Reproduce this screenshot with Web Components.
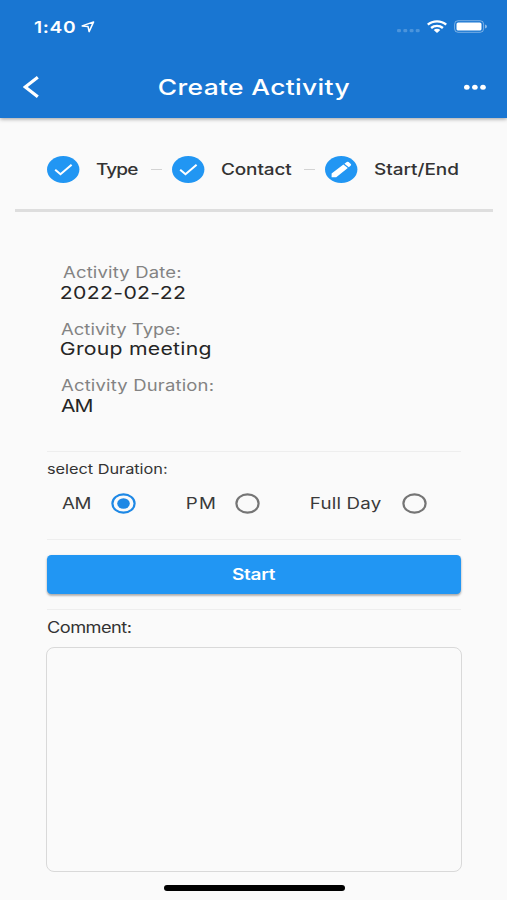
<!DOCTYPE html>
<html lang="en">
<head>
<meta charset="utf-8">
<title>Create Activity</title>
<style>
html, body { margin: 0; height: 100%; background: #fafafa; }
body { font-family: Inter, "Liberation Sans", sans-serif; overflow: hidden; }
</style>
</head>
<body>
<activity-app></activity-app>
<script>
const define = (name, html, setup) => customElements.define(name, class extends HTMLElement {
  constructor() {
    super();
    this.attachShadow({ mode: "open" }).innerHTML = html;
  }
  connectedCallback() { if (setup) setup(this, this.shadowRoot); }
});

/* Wide text: glyphs are widened by a fixed ratio and tracked to fill the given width. */
const STRETCH = 1.2;
const pen = document.createElement("canvas").getContext("2d");
define("wide-text", `
<style>
:host { display: block; flex: none; height: 20px; line-height: 20px; white-space: nowrap; }
span { display: inline-block; transform-origin: 0 50%; }
</style><span></span>`, (el, root) => {
  const text = el.getAttribute("text"), w = +el.getAttribute("w");
  const size = +el.getAttribute("size"), weight = el.getAttribute("weight") || 400;
  pen.font = `${weight} ${size}px Inter, "Liberation Sans", sans-serif`;
  const m = pen.measureText(text);
  const ink = m.actualBoundingBoxLeft + m.actualBoundingBoxRight;
  const gap = (w / STRETCH - ink) / (text.length - 1);
  const span = root.querySelector("span");
  span.textContent = text;
  span.style.cssText = `font-size:${size}px;font-weight:${weight};letter-spacing:${gap}px;transform:translateX(${m.actualBoundingBoxLeft * STRETCH}px) scaleX(${STRETCH})`;
  el.style.width = w + "px";
});

define("status-bar", `
<style>
:host { display: flex; height: 53px; align-items: center; padding: 0 20px 0 34px; box-sizing: border-box; }
svg { display: block; flex: none; }
.loc { margin-left: 6px; }
.dots { margin-left: auto; }
.wifi { margin-left: 7px; }
.bat { margin-left: 7px; }
</style>
<wide-text text="1:40" w="41" size="16" weight="600"></wide-text>
<svg class="loc" width="14" height="12" viewBox="0 0 14 12"><path d="M1.2 4.9 12.6 .9 8.1 10.6 7 5.4Z" fill="none" stroke="#fff" stroke-width="1.5" stroke-linejoin="round"/></svg>
<svg class="dots" width="23" height="12" viewBox="0 0 23 12"><g fill="#fff" fill-opacity=".22"><rect y="8" width="4" height="3.2" rx="1.3"/><rect x="6.3" y="8" width="4" height="3.2" rx="1.3"/><rect x="12.6" y="8" width="4" height="3.2" rx="1.3"/><rect x="18.7" y="8" width="4" height="3.2" rx="1.3"/></g></svg>
<svg class="wifi" width="20" height="13" viewBox="0 0 20 13"><g fill="none" stroke="#fff" stroke-width="2.4"><path d="M.8 4.7C5.8 .3 14.2 .3 19.2 4.7"/><path d="M4.1 8C7.4 5.1 12.6 5.1 15.9 8"/></g><path d="M6.7 10C8.6 8.4 11.4 8.4 13.3 10L10 12.9Z" fill="#fff"/></svg>
<svg class="bat" width="33" height="13" viewBox="0 0 33 13"><rect x=".6" y=".7" width="29" height="11.6" rx="3.5" fill="none" stroke="#fff" stroke-opacity=".42"/><rect x="2.5" y="2.4" width="25" height="8.2" rx="1.7" fill="#fff"/><path d="M31 4.6q2 .5 2 2t-2 2Z" fill="#fff" fill-opacity=".5"/></svg>`);

define("nav-bar", `
<style>
:host { display: grid; grid-template-columns: 136px 1fr 135px; align-items: center; height: 65px; padding: 3.5px 0 0 22.5px; box-sizing: border-box; }
svg { display: block; }
.more { justify-self: end; margin-right: 21px; }
</style>
<svg width="16" height="22" viewBox="0 0 16 22"><path d="M14.8 1.3 2.2 11 14.8 20.7" fill="none" stroke="#fff" stroke-width="3.2"/></svg>
<slot></slot>
<svg class="more" width="22" height="6" viewBox="0 0 22 6"><g fill="#fff"><ellipse cx="2.8" cy="3.3" rx="2.8" ry="2.5"/><ellipse cx="10.9" cy="3.3" rx="2.8" ry="2.5"/><ellipse cx="19" cy="3.3" rx="2.8" ry="2.5"/></g></svg>`);

define("step-item", `
<style>
:host { display: flex; align-items: center; gap: 16px; flex: none; }
svg { display: block; flex: none; }
</style>
<svg width="33" height="27" viewBox="0 0 33 27"><ellipse cx="16.2" cy="13.5" rx="16.2" ry="13.5" fill="#2196f3"/><g id="g"></g></svg>
<slot></slot>`, (el, root) => {
  root.getElementById("g").innerHTML = el.getAttribute("icon") === "edit"
    ? '<path fill="#fff" d="M6.6 21.3V17.5L18.4 8.5 22.8 12 11.2 21.3ZM19.4 7.7 21.8 6Q22.8 5.5 23.6 6.1L25.8 7.9Q26.5 8.6 25.8 9.5L23.8 11.2Z"/>'
    : '<path d="M8.2 13.8 13.5 18.2 24.6 8.8" fill="none" stroke="#fff" stroke-width="2.1"/>';
});

define("step-row", `
<style>
:host { display: flex; align-items: center; height: 91px; margin: 0 14px 0 15px; padding: 11px 0 0 32px; box-sizing: border-box; }
i { width: 11px; height: 1px; background: #d3d3d3; flex: none; }
.a { margin: 0 10px 0 12.5px; }
.b { margin: 0 10.5px 0 11.5px; }
</style>
<step-item><wide-text text="Type" w="42" size="15.8" weight="500"></wide-text></step-item>
<i class="a"></i>
<step-item><wide-text text="Contact" w="71.5" size="15.8" weight="500"></wide-text></step-item>
<i class="b"></i>
<step-item icon="edit"><wide-text text="Start/End" w="84" size="15.8" weight="500"></wide-text></step-item>`);

define("detail-item", `
<style>
:host { display: block; height: 56.5px; }
.k { color: #838383; height: 20.5px; }
.v { color: #252525; }
</style>
<div class="k"><slot name="label"></slot></div><div class="v"><slot></slot></div>`);

define("radio-option", `
<style>
:host { display: flex; align-items: center; flex: none; color: #3a3a3a; --ring: #757575; }
:host([checked]) { --ring: #1e88e5; }
svg { display: block; margin-left: 21px; }
.dot { display: none; }
:host([checked]) .dot { display: block; }
</style>
<slot></slot>
<svg width="25" height="21" viewBox="0 0 25 21"><ellipse cx="12.5" cy="10.5" rx="11.1" ry="9.2" fill="none" stroke="var(--ring)" stroke-width="2.2"/><ellipse class="dot" cx="12.5" cy="10.5" rx="6.3" ry="5.2" fill="#1e88e5"/></svg>`);

define("start-button", `
<style>
:host { display: flex; align-items: center; justify-content: center; height: 39.5px; background: #2196f3; color: #fff; border-radius: 4.5px; box-shadow: 0 2px 2px rgba(0,0,0,.2), 0 1px 3px rgba(0,0,0,.18); }
</style><slot></slot>`);

define("activity-app", `
<style>
:host { display: flex; flex-direction: column; width: 507px; height: 900px; background: #fafafa; color: #333; overflow: hidden; }
header { flex: none; height: 118px; background: #1976d2; color: #fff; box-shadow: 0 1px 4px rgba(0,0,0,.38); }
step-row { flex: none; }
.rule { flex: none; height: 2.5px; margin: 0 14px 0 15px; background: #dedede; }
.details { flex: none; margin: 50.8px 0 0 60.5px; height: 190px; }
.form { margin: 0 46px 0 47px; display: flex; flex-direction: column; }
.line { height: 1px; flex: none; background: #eee; }
.options { display: flex; height: 21px; margin: 14.5px 0 25px 15px; align-items: center; }
.options radio-option:nth-child(2) { margin-left: 50.5px; }
.options radio-option:nth-child(3) { margin-left: 51px; }
.options radio-option:nth-child(3) wide-text { margin-right: -1px; }
.box { height: 225.5px; box-sizing: border-box; border: 1px solid #d9d9d9; border-radius: 8px; margin: 10px -1px 0; }
.home { height: 6px; width: 181px; border-radius: 3px; background: #000; margin: 12.7px 0 0 163.5px; flex: none; }
</style>
<header>
  <status-bar></status-bar>
  <nav-bar><wide-text text="Create Activity" w="191" size="22" weight="500"></wide-text></nav-bar>
</header>
<step-row></step-row>
<div class="rule"></div>
<div class="details">
  <detail-item><wide-text slot="label" style="margin-left:2.5px" text="Activity Date:" w="118" size="15.4"></wide-text><wide-text text="2022-02-22" w="124" size="17.7"></wide-text></detail-item>
  <detail-item><wide-text slot="label" text="Activity Type:" w="119" size="15.4"></wide-text><wide-text text="Group meeting" w="149.5" size="17.7"></wide-text></detail-item>
  <detail-item><wide-text slot="label" text="Activity Duration:" w="152.5" size="15.4"></wide-text><wide-text text="AM" w="31.5" size="17.5"></wide-text></detail-item>
</div>
<div class="form">
  <div class="line" style="margin-top:-1.3px"></div>
  <wide-text style="margin-top:6px" text="select Duration:" w="119.5" size="13.6"></wide-text>
  <div class="options">
    <radio-option checked><wide-text text="AM" w="28" size="15.6"></wide-text></radio-option>
    <radio-option><wide-text text="PM" w="27.5" size="15.6"></wide-text></radio-option>
    <radio-option><wide-text text="Full Day" w="70.5" size="15.6"></wide-text></radio-option>
  </div>
  <div class="line"></div>
  <start-button style="margin-top:15px"><wide-text text="Start" w="44" size="15.8" weight="600"></wide-text></start-button>
  <div class="line" style="margin-top:14.5px"></div>
  <wide-text style="margin-top:7px" text="Comment:" w="84.5" size="15.2"></wide-text>
  <div class="box"></div>
</div>
<div class="home"></div>`);
</script>
</body>
</html>
